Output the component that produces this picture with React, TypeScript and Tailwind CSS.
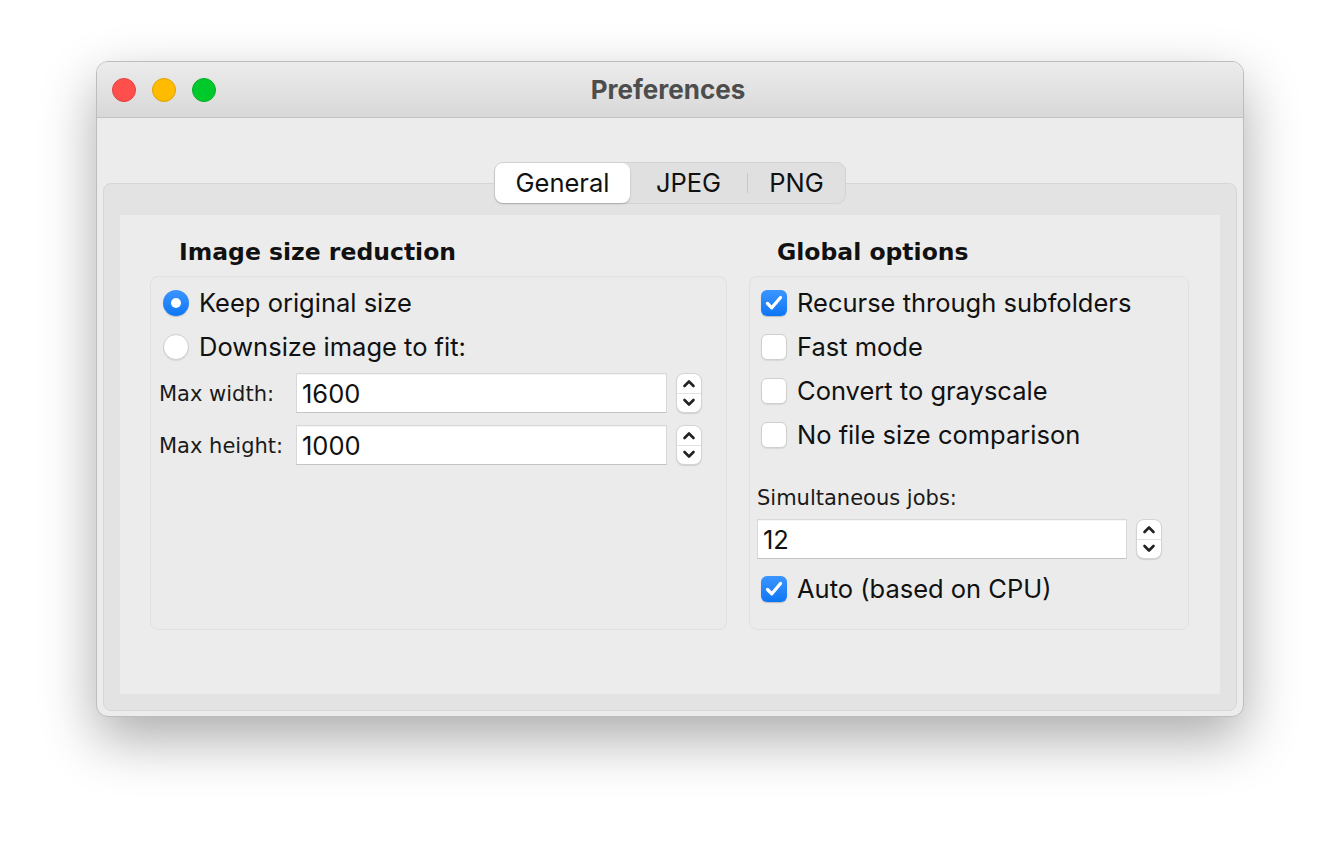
import React from "react";

const SF = "font-['Inter','Noto_Sans',sans-serif]";
const LG = "font-['DejaVu_Sans','Noto_Sans',sans-serif]";

function Spinner() {
  return (
    <div className="w-[26px] h-[40px] rounded-[8px] bg-white border border-[#d4d4d4] shadow-[0_1px_1px_rgba(0,0,0,0.12)] flex flex-col items-stretch shrink-0">
      <div className="flex-1 flex items-center justify-center border-b border-[#e2e2e2] pt-[1px]">
        <svg width="14" height="9" viewBox="0 0 14 9">
          <polyline points="2.5,7 7,2.5 11.5,7" fill="none" stroke="#222" strokeWidth="2.6" strokeLinecap="round" strokeLinejoin="round" />
        </svg>
      </div>
      <div className="flex-1 flex items-center justify-center pb-[1px]">
        <svg width="14" height="9" viewBox="0 0 14 9">
          <polyline points="2.5,2 7,6.5 11.5,2" fill="none" stroke="#222" strokeWidth="2.6" strokeLinecap="round" strokeLinejoin="round" />
        </svg>
      </div>
    </div>
  );
}

function Checkbox({ checked, label }: { checked: boolean; label: string }) {
  return (
    <div className="h-[44px] flex items-center">
      {checked ? (
        <div className="w-[26px] h-[26px] rounded-[6px] bg-gradient-to-b from-[#3a95ff] to-[#0a76f5] flex items-center justify-center shadow-[0_1px_1px_rgba(0,0,0,0.2)]">
          <svg width="20" height="18" viewBox="0 0 20 18">
            <polyline points="3.5,9.5 7.8,13.8 16.5,3.5" fill="none" stroke="white" strokeWidth="3.3" strokeLinecap="round" strokeLinejoin="round" />
          </svg>
        </div>
      ) : (
        <div className="w-[26px] h-[26px] rounded-[6px] bg-white border border-[#cfcfcf] shadow-[0_1px_1px_rgba(0,0,0,0.08)]" />
      )}
      <span className={`ml-[10px] text-[25.5px] text-[#111] leading-none ${SF}`}>{label}</span>
    </div>
  );
}

function Radio({ checked, label }: { checked: boolean; label: string }) {
  return (
    <div className="h-[44px] flex items-center">
      {checked ? (
        <div className="w-[26px] h-[26px] rounded-full bg-gradient-to-b from-[#3a95ff] to-[#0a76f5] flex items-center justify-center shadow-[0_1px_1px_rgba(0,0,0,0.2)]">
          <div className="w-[10px] h-[10px] rounded-full bg-white" />
        </div>
      ) : (
        <div className="w-[26px] h-[26px] rounded-full bg-white border border-[#cfcfcf] shadow-[0_1px_1px_rgba(0,0,0,0.08)]" />
      )}
      <span className={`ml-[10px] text-[25.5px] text-[#111] leading-none ${SF}`}>{label}</span>
    </div>
  );
}

function NumField({ value, w }: { value: string; w: string }) {
  return (
    <div className={`${w} h-[40px] bg-white border border-[#d8d8d8] border-b-[#c4c4c4] flex items-center pl-[5px] pt-[2px] shadow-[inset_0_1px_0_rgba(0,0,0,0.04)]`}>
      <span className={`text-[25.5px] text-[#111] leading-none ${SF}`}>{value}</span>
    </div>
  );
}

export default function App() {
  return (
    <div className="w-[1340px] h-[852px] bg-white pl-[96px] pt-[61px]">
      <div className="w-[1148px] h-[656px] rounded-[12px] bg-[#ececec] border border-[#bdbdbd] shadow-[0_22px_55px_rgba(0,0,0,0.33)] overflow-hidden flex flex-col">
        {/* Title bar */}
        <div className="h-[56px] shrink-0 bg-gradient-to-b from-[#ececec] to-[#d8d8d8] border-b border-[#c2c2c2] grid grid-cols-[1fr_auto_1fr] items-center">
          <div className="flex items-center gap-[16px] pl-[15px]">
            <div className="w-[24px] h-[24px] rounded-full bg-[#fe4f4d] border border-[#e2403e]" />
            <div className="w-[24px] h-[24px] rounded-full bg-[#febb00] border border-[#e0a200]" />
            <div className="w-[24px] h-[24px] rounded-full bg-[#00c92b] border border-[#00b024]" />
          </div>
          <div className={`text-center text-[26px] font-bold text-[#4d4d4d] pr-[4px] ${SF}`}>Preferences</div>
          <div />
        </div>

        {/* Body */}
        <div className="flex-1 px-[6px] pt-[65px] pb-[5px] flex flex-col">
          <div className="flex-1 rounded-[8px] bg-[#e3e3e3] border border-[#d6d6d6] flex flex-col items-center">
            {/* Segmented control */}
            <div className="mt-[-22px] h-[42px] w-[352px] rounded-[9px] bg-[#e0e0e0] border border-[#d3d3d3] flex items-center">
              <div className={`w-[135px] h-[40px] rounded-[8px] bg-white shadow-[0_1px_2px_rgba(0,0,0,0.22)] flex items-center justify-center text-[25.5px] text-[#111] ${SF}`}>General</div>
              <div className={`w-[117px] h-full flex items-center justify-center text-[25.5px] text-[#111] ${SF}`}>JPEG</div>
              <div className="w-px h-[20px] bg-[#c9c9c9]" />
              <div className={`flex-1 h-full flex items-center justify-center text-[25.5px] text-[#111] ${SF}`}>PNG</div>
            </div>

            {/* Content */}
            <div className="self-stretch mx-[16px] mt-[11px] mb-[16px] flex-1 bg-[#ececec] flex pl-[30px] pr-[31px] gap-[22px]">
              {/* Left column */}
              <div className="w-[577px] flex flex-col">
                <div className={`h-[61px] flex items-center pl-[29px] pt-[15px] text-[23.5px] font-bold text-[#111] ${LG}`}>Image size reduction</div>
                <div className="h-[354px] rounded-[8px] border border-[#e0e0e0] bg-[#ebebeb] pt-[4px] flex flex-col">
                  <div className="pl-[12px]">
                    <Radio checked label="Keep original size" />
                    <Radio checked={false} label="Downsize image to fit:" />
                  </div>
                  <div className="mt-[4px] flex items-center pl-[8px] h-[40px]">
                    <span className={`w-[137px] pt-[4px] text-[21px] text-[#1a1a1a] ${LG}`}>Max width:</span>
                    <NumField value="1600" w="w-[371px]" />
                    <div className="ml-[9px]"><Spinner /></div>
                  </div>
                  <div className="mt-[12px] flex items-center pl-[8px] h-[40px]">
                    <span className={`w-[137px] pt-[4px] text-[21px] text-[#1a1a1a] ${LG}`}>Max height:</span>
                    <NumField value="1000" w="w-[371px]" />
                    <div className="ml-[9px]"><Spinner /></div>
                  </div>
                </div>
              </div>

              {/* Right column */}
              <div className="w-[440px] flex flex-col">
                <div className={`h-[61px] flex items-center pl-[28px] pt-[15px] text-[23.5px] font-bold text-[#111] ${LG}`}>Global options</div>
                <div className="h-[354px] rounded-[8px] border border-[#e0e0e0] bg-[#ebebeb] pt-[4px] flex flex-col">
                  <div className="pl-[11px]">
                    <Checkbox checked label="Recurse through subfolders" />
                    <Checkbox checked={false} label="Fast mode" />
                    <Checkbox checked={false} label="Convert to grayscale" />
                    <Checkbox checked={false} label="No file size comparison" />
                  </div>
                  <div className={`mt-[30px] h-[24px] flex items-center pl-[7px] text-[21px] text-[#1a1a1a] ${LG}`}>Simultaneous jobs:</div>
                  <div className="mt-[8px] flex items-center pl-[7px]">
                    <NumField value="12" w="w-[370px]" />
                    <div className="ml-[9px]"><Spinner /></div>
                  </div>
                  <div className="mt-[8px] pl-[11px]">
                    <Checkbox checked label="Auto (based on CPU)" />
                  </div>
                </div>
              </div>
            </div>
          </div>
        </div>
      </div>
    </div>
  );
}
